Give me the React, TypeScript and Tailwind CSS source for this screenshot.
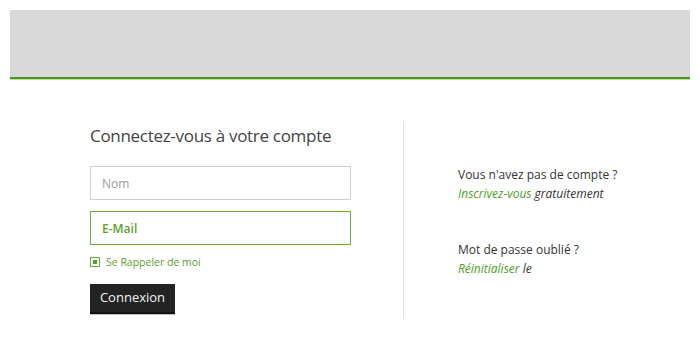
const font = { fontFamily: '"Open Sans", "Noto Sans", sans-serif' };

const LoginForm = () => {
  return (
    <div className="w-[314px] border-r border-[#e3e3e3] pt-[3px] pb-[5px]">
      <h2 className="text-[17px] leading-[24px] text-[#444] tracking-[-0.3px]">
        Connectez-vous à votre compte
      </h2>

      <div className="mt-[18px] w-[261px] flex flex-col gap-[11px]">
        <input
          type="text"
          placeholder="Nom"
          className="h-[34px] w-full border border-[#cfcfcf] px-[11px] text-[12px] text-[#444] placeholder:text-[#9a9a9a] outline-none"
        />
        <input
          type="text"
          defaultValue="E-Mail"
          className="h-[34px] w-full border border-[#6aad3d] px-[11px] text-[12px] font-semibold text-[#5c9e2e] outline-none"
        />
      </div>

      <label className="mt-[11px] flex items-center gap-[6px] text-[10.5px] leading-[12px] text-[#5c9e2e]">
        <span className="w-[10px] h-[10px] border border-[#6aad3d] flex items-center justify-center">
          <span className="w-[4px] h-[4px] bg-[#5c9e2e]"></span>
        </span>
        Se Rappeler de moi
      </label>

      <button className="mt-[16px] w-[85px] h-[30px] bg-[#232323] text-[#f2f2f2] text-[13px] border-b-2 border-[#111] shadow-[0_1px_0_#bbb]">
        Connexion
      </button>
    </div>
  );
};

const SidePanel = () => {
  return (
    <div className="pl-[54px] pt-[44px] text-[12px] leading-[19px] text-[#333]">
      <p>Vous n'avez pas de compte ?</p>
      <p className="italic">
        <a href="#" className="text-[#4c9e1f]">Inscrivez-vous</a> gratuitement
      </p>

      <p className="mt-[37px]">Mot de passe oublié ?</p>
      <p className="italic">
        <a href="#" className="text-[#4c9e1f]">Réinitialiser</a> le
      </p>
    </div>
  );
};

export default function App() {
  return (
    <div className="w-[700px] h-[360px] bg-white px-[10px] pt-[10px]" style={font}>
      <div className="h-[69px] bg-[#d9d9d9] border-b-2 border-[#4f8f2f] shadow-[0_1px_0_#b6ec88]"></div>

      <div className="mt-[42px] pl-[80px] flex">
        <LoginForm />
        <SidePanel />
      </div>
    </div>
  );
}
